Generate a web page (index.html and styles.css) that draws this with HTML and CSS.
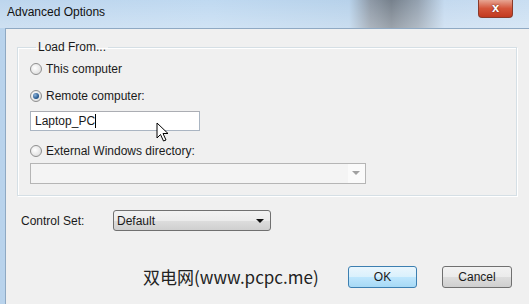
FILE: index.html
```html
<!DOCTYPE html>
<html lang="en">

<head>
    <meta charset="UTF-8">
    <title>Advanced Options</title>
    <link rel="stylesheet" href="styles.css">
</head>

<body>
    <div class="window">
        <div class="title_bar">
            <span class="title">Advanced Options</span>
            <span class="close_btn">x</span>
        </div>
        <div class="client">
            <fieldset class="group">
                <legend>Load From...</legend>
                <label class="radio_row first_row"><span class="radio"></span>This computer</label>
                <label class="radio_row"><span class="radio checked"></span>Remote computer:</label>
                <div class="text_box">Laptop_PC<span class="caret"></span>
                    <svg class="cursor" width="14" height="21" viewBox="0 0 14 21">
                        <path d="M1 1 L1 16 L4.5 12.5 L7.5 19 L10 18 L7 11.5 L12 11.5 Z" fill="#fff" stroke="#000" stroke-width="1"/>
                    </svg>
                </div>
                <label class="radio_row"><span class="radio"></span>External Windows directory:</label>
                <div class="combo disabled"><span class="combo_arrow"></span></div>
            </fieldset>
            <div class="control_row">
                <span class="control_label">Control Set:</span>
                <div class="select">Default<span class="select_arrow"></span></div>
            </div>
            <div class="bottom_row">
                <span class="watermark">双电网(www.pcpc.me)</span>
                <span class="btn ok">OK</span>
                <span class="btn">Cancel</span>
            </div>
        </div>
    </div>
</body>

</html>
```

FILE: styles.css
```css
* {
    margin: 0;
    padding: 0;
    box-sizing: border-box;
}

body {
    width: 529px;
    height: 304px;
    overflow: hidden;
    font-family: "Liberation Sans", Arial, sans-serif;
    font-size: 12px;
    color: #1a1a1a;
    background: #aac8e6;
}

.window {
    width: 529px;
    height: 304px;
    display: flex;
    flex-direction: column;
    background: linear-gradient(90deg, #b9d3ec 0%, #bcd7f0 40%, #b3cfe9 66%, #8894a2 70%, #6f7a86 74%, #8e9cab 79%, #c0d7ee 84%, #c6dcf1 100%);
}

.title_bar {
    height: 28px;
    display: flex;
    justify-content: space-between;
    align-items: flex-start;
    background: linear-gradient(180deg, rgba(255, 255, 255, 0.05), rgba(255, 255, 255, 0.3));
}

.title {
    padding: 5px 0 0 7px;
    font-family: "Liberation Sans", Arial, sans-serif;
    font-size: 12px;
    color: #111;
}

.close_btn {
    width: 35px;
    height: 18px;
    margin-right: 16px;
    border: 1px solid #8a3a2a;
    border-top: none;
    border-radius: 0 0 4px 4px;
    background: linear-gradient(180deg, #e7a593 0%, #d4553a 50%, #c2391f 100%);
    color: #fff;
    font-weight: bold;
    font-size: 13px;
    line-height: 15px;
    text-align: center;
    text-shadow: 0 0 2px #5a1a10;
}

.client {
    flex: 1;
    margin-left: 5px;
    background: #f0f0f0;
    border-top: 1px solid #8fa9c3;
    border-left: 1px solid #8fa9c3;
    padding: 11px 12px 0 11px;
}

.group {
    height: 156px;
    border: 1px solid #d5dfe5;
    box-shadow: inset 1px 1px 0 #fff, 1px 1px 0 #fff;
    padding: 0 0 0 12px;
    display: flex;
    flex-direction: column;
}

.group legend {
    margin-left: 6px;
    padding: 0 2px;
    color: #1a1a1a;
}

.radio_row {
    display: flex;
    align-items: center;
    gap: 4px;
    height: 14px;
    margin-top: 13px;
}

.radio_row.first_row {
    margin-top: 8px;
}

.radio {
    width: 12px;
    height: 12px;
    border-radius: 50%;
    border: 1px solid #8f8f8f;
    background: radial-gradient(circle at 40% 40%, #fff 0%, #e6e6e6 60%, #cfcfcf 100%);
    display: flex;
    align-items: center;
    justify-content: center;
}

.radio.checked::after {
    content: "";
    width: 6px;
    height: 6px;
    border-radius: 50%;
    background: radial-gradient(circle at 35% 35%, #8fb3d9 0%, #2a5d93 60%, #1d3f66 100%);
}

.text_box {
    position: relative;
    width: 170px;
    height: 20px;
    margin-top: 8px;
    border: 1px solid #aab5c2;
    border-top-color: #abadb3;
    background: #fff;
    padding: 2px 0 0 4px;
    display: flex;
}

.caret {
    width: 1px;
    height: 14px;
    background: #000;
}

.cursor {
    position: absolute;
    left: 125px;
    top: 10px;
}

.combo {
    width: 336px;
    height: 21px;
    margin-top: 5px;
    border: 1px solid #b5b5b5;
    background: #f4f4f4;
    display: flex;
    justify-content: flex-end;
}

.combo_arrow {
    width: 17px;
    background: #fafafa;
    position: relative;
}

.combo_arrow::after {
    content: "";
    position: absolute;
    left: 4px;
    top: 7px;
    border-left: 4px solid transparent;
    border-right: 4px solid transparent;
    border-top: 4px solid #a0a0a0;
}

.control_row {
    display: flex;
    align-items: center;
    margin-top: 14px;
    padding-left: 4px;
}

.control_label {
    width: 92px;
}

.select {
    position: relative;
    width: 158px;
    height: 21px;
    border: 1px solid #707070;
    border-radius: 3px;
    background: linear-gradient(180deg, #f2f2f2 0%, #ebebeb 50%, #dddddd 51%, #cfcfcf 100%);
    padding: 3px 0 0 3px;
}

.select_arrow {
    position: absolute;
    right: 6px;
    top: 8px;
    border-left: 4px solid transparent;
    border-right: 4px solid transparent;
    border-top: 4px solid #111;
}

.bottom_row {
    display: flex;
    align-items: center;
    margin-top: 33px;
    padding-left: 126px;
}

.watermark {
    font-family: "Noto Sans CJK SC", "Liberation Sans", sans-serif;
    font-size: 17px;
    color: #222;
    width: 205px;
}

.btn {
    width: 70px;
    height: 22px;
    border: 1px solid #707070;
    border-radius: 3px;
    background: linear-gradient(180deg, #f2f2f2 0%, #ebebeb 50%, #dddddd 51%, #cfcfcf 100%);
    display: flex;
    align-items: center;
    justify-content: center;
    margin-left: 25px;
}

.btn.ok {
    width: 69px;
    margin-left: 0;
    border-color: #3c7fb1;
    background: linear-gradient(180deg, #eaf6fd 0%, #d9f0fc 50%, #bee6fd 51%, #a7d9f5 100%);
}
```
